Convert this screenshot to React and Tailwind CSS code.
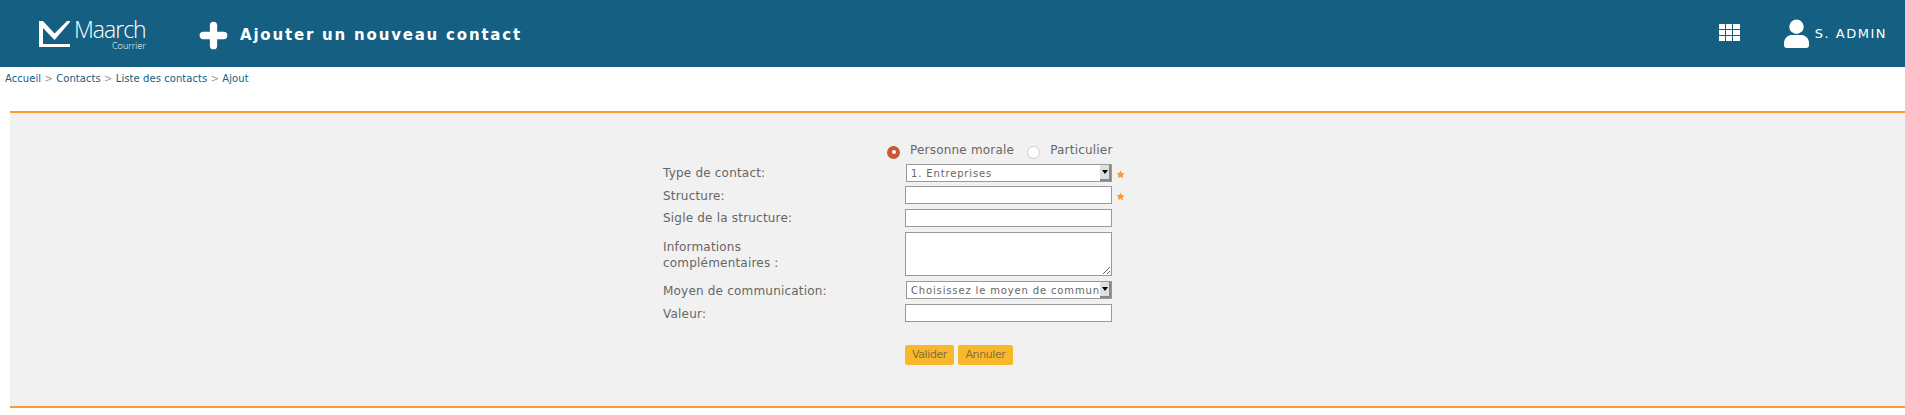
import { Plus } from "lucide-react"

const font = "font-['DejaVu_Sans',sans-serif]"

const Star = () => (
  <svg viewBox="0 0 24 24" className="w-[9px] h-[9px] fill-[#f99b32]">
    <path d="M12 1l3.400 7.200 7.600 1-5.600 5.400 1.400 7.900L12 17.800l-6.800 3.700 1.400-7.900L1 9.200l7.600-1z" />
  </svg>
)

const Logo = () => (
  <div className="flex items-start w-[130px]">
    <svg viewBox="0 0 31 26" className="w-[31px] h-[26px] mt-[21px] shrink-0 fill-white">
      <path d="M0 0h4l11.500 12.500L28 0h3v1L15.500 19 4 7v16h27v3H0z" />
    </svg>
    <div className="ml-[4px] mt-[17px] flex flex-col items-end font-['Open_Sans',sans-serif] font-light text-white">
      <span className="text-[23px] leading-[24px] tracking-[-1px]">Maarch</span>
      <span className="text-[9px] leading-[10px]">Courrier</span>
    </div>
  </div>
)

const Field = ({ label, star, children, className = "", labelClass = "pt-[2px]" }) => (
  <div className={"flex " + className}>
    <label className={"w-[242px] shrink-0 text-[12px] leading-[16px] tracking-[0.2px] text-[#666] " + labelClass}>{label}</label>
    <div className="w-[207px] shrink-0">{children}</div>
    {star && (
      <span className="ml-[4px] mt-[6px]">
        <Star />
      </span>
    )}
  </div>
)

const FakeSelect = ({ value }) => (
  <div className="ml-[1px] h-[18px] border border-[#999] bg-white flex items-center">
    <span className="flex-1 pl-[4px] text-[10px] tracking-[0.85px] text-[#666] whitespace-nowrap">{value}</span>
    <span className="w-[11px] h-full bg-[#e0e0e0] border-r-2 border-b-2 border-[#888] flex items-center justify-center">
      <span className="w-0 h-0 border-x-[3px] border-x-transparent border-t-[4px] border-t-black" />
    </span>
  </div>
)

const inputCls = "block w-[207px] h-[18px] border border-[#999] bg-white"

export default function App() {
  return (
    <div className={"min-h-[415px] bg-white " + font}>
      {/* Header */}
      <header className="h-[67px] bg-[#156082] flex items-center">
        <div className="ml-[39px] self-start">
          <Logo />
        </div>
        <Plus className="ml-[27px] mt-[4px] w-[35px] h-[35px] text-white" strokeWidth={5} />
        <h1 className="ml-[9px] mt-[3px] text-[15px] font-bold tracking-[1.8px] text-white">Ajouter un nouveau contact</h1>
        <div className="ml-auto -mt-[3px] grid grid-cols-3 gap-[1px] w-[21px]">
          {Array.from({ length: 9 }).map((_, i) => (
            <span key={i} className="h-[5px] bg-white" />
          ))}
        </div>
        <svg viewBox="0 0 26 30" className="ml-[44px] w-[25px] h-[29px] fill-white">
          <circle cx="13" cy="8" r="7.500" />
          <path d="M0 25c0-6 5-8.500 8-8.500h10c3 0 8 2.500 8 8.500v2c0 2-1 3-3 3H3c-2 0-3-1-3-3z" />
        </svg>
        <span className="ml-[6px] mr-[18px] text-[13px] tracking-[1.5px] text-white">S. ADMIN</span>
      </header>

      {/* Breadcrumb */}
      <nav className="h-[44px] pl-[5px] pt-[5px] text-[10px] leading-[14px] tracking-[0.07px] text-[#999]">
        <span className="text-[#156082]">Accueil</span> {">"} <span className="text-[#156082]">Contacts</span> {">"}{" "}
        <span className="text-[#156082]">Liste des contacts</span> {">"} <span className="text-[#156082]">Ajout</span>
      </nav>

      {/* Form */}
      <section className="ml-[10px] h-[297px] bg-[#f1f1f1] border-y-2 border-[#f99b32] pl-[653px] pt-[28px]">
        <div className="flex items-center h-[20px] ml-[224px] text-[12px] tracking-[0.2px] text-[#666]">
          <span className="mt-[2px] w-[13px] h-[13px] rounded-full bg-[#c9592f] flex items-center justify-center">
            <span className="w-[4px] h-[4px] rounded-full bg-white" />
          </span>
          <span className="ml-[10px] mb-[2px]">Personne morale</span>
          <span className="mt-[2px] ml-[13px] w-[13px] h-[13px] rounded-full bg-white border border-[#ccc]" />
          <span className="ml-[10px] mb-[2px]">Particulier</span>
        </div>
        <div className="mt-[3px] flex flex-col gap-[5px]">
          <Field label="Type de contact:" star className="-mb-[1px]" labelClass="pt-[1px]">
            <FakeSelect value="1. Entreprises" />
          </Field>
          <Field label="Structure:" star>
            <input className={inputCls} />
          </Field>
          <Field label="Sigle de la structure:" labelClass="pt-[1px]">
            <input className={inputCls} />
          </Field>
          <Field label={<span className="block">Informations<br />complémentaires :</span>} labelClass="pt-[7px]">
            <textarea className="block w-[207px] h-[44px] border border-[#999] bg-white" />
          </Field>
          <Field label="Moyen de communication:">
            <FakeSelect value="Choisissez le moyen de commun" />
          </Field>
          <Field label="Valeur:">
            <input className={inputCls} />
          </Field>
        </div>
        <div className="mt-[23px] ml-[242px] flex gap-[4px]">
          <button className="h-[20px] w-[49px] rounded-[2px] bg-[#f9b82b] text-[11px] tracking-[-0.4px] text-[#8a6d3b]">Valider</button>
          <button className="h-[20px] w-[55px] rounded-[2px] bg-[#f9b82b] text-[11px] tracking-[-0.4px] text-[#8a6d3b]">Annuler</button>
        </div>
      </section>
    </div>
  )
}
